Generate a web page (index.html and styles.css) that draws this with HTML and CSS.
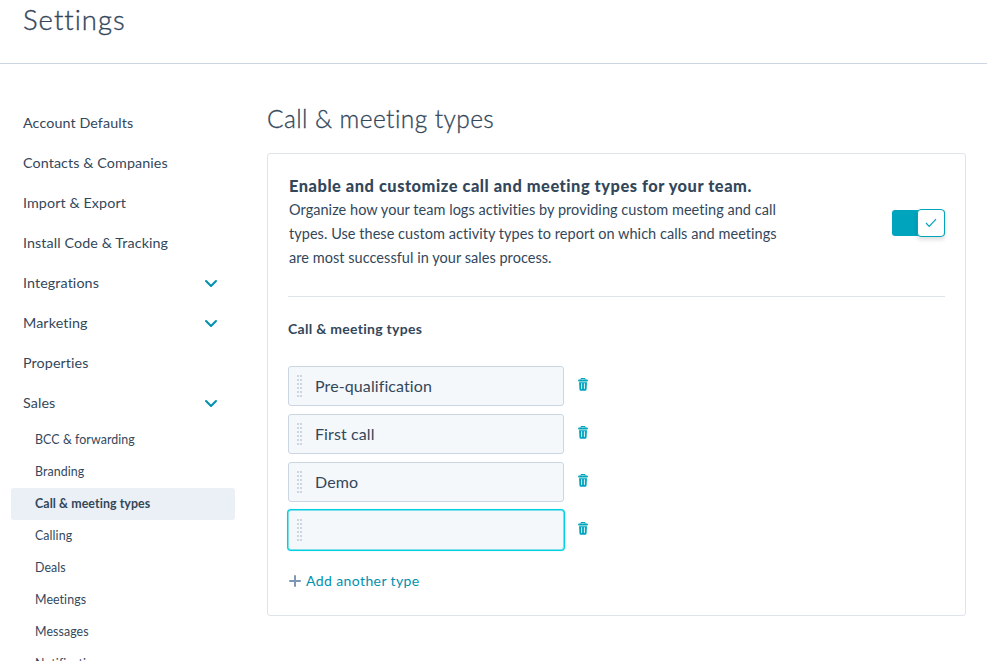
FILE: index.html
```html
<!DOCTYPE html>
<html lang="en">
<head>
  <meta charset="UTF-8">
  <meta name="viewport" content="width=device-width, initial-scale=1.0">
  <title>Settings</title>
  <link rel="stylesheet" href="styles.css">
</head>
<body>
  <!-- Shared icons -->
  <svg class="icon-defs" width="0" height="0">
    <symbol id="chevron" viewBox="0 0 14 10">
      <path d="M2 2l5 5 5-5" fill="none" stroke="currentColor" stroke-width="2" stroke-linecap="round" stroke-linejoin="round"/>
    </symbol>
    <symbol id="trash" viewBox="0 0 10 13">
      <path d="M3 1.6V.5h4v1.1" fill="none" stroke="currentColor"/>
      <rect x="0.2" y="1.4" width="9.6" height="2" rx="0.6" fill="currentColor"/>
      <path d="M1 4.2h8l-.5 7.3q-.1 1.3-1.3 1.3H2.8q-1.2 0-1.3-1.3z" fill="currentColor"/>
      <path d="M3.6 5.3v5.6M6.4 5.3v5.6" fill="none" stroke="#fff" stroke-width="0.9"/>
    </symbol>
    <symbol id="grip" viewBox="0 0 5 22">
      <path d="M1 0v22M4 0v22" fill="none" stroke="#cbd6e2" stroke-width="2" stroke-dasharray="2 2"/>
    </symbol>
  </svg>

  <!-- Header -->
  <header>
    <h1>Settings</h1>
  </header>

  <div class="layout">
    <!-- Sidebar -->
    <nav class="sidebar">
      <a href="#" class="nav-item">Account Defaults</a>
      <a href="#" class="nav-item">Contacts &amp; Companies</a>
      <a href="#" class="nav-item">Import &amp; Export</a>
      <a href="#" class="nav-item">Install Code &amp; Tracking</a>
      <a href="#" class="nav-item">Integrations <svg class="chevron"><use href="#chevron"/></svg></a>
      <a href="#" class="nav-item">Marketing <svg class="chevron"><use href="#chevron"/></svg></a>
      <a href="#" class="nav-item">Properties</a>
      <a href="#" class="nav-item">Sales <svg class="chevron"><use href="#chevron"/></svg></a>
      <div class="sub-nav">
        <a href="#">BCC &amp; forwarding</a>
        <a href="#">Branding</a>
        <a href="#" class="active">Call &amp; meeting types</a>
        <a href="#">Calling</a>
        <a href="#">Deals</a>
        <a href="#">Meetings</a>
        <a href="#">Messages</a>
        <a href="#">Notifications</a>
      </div>
    </nav>

    <!-- Main Content -->
    <main>
      <h2>Call &amp; meeting types</h2>
      <section class="card">
        <div class="intro">
          <div class="intro-text">
            <h3>Enable and customize call and meeting types for your team.</h3>
            <p>Organize how your team logs activities by providing custom meeting and call<br>
              types. Use these custom activity types to report on which calls and meetings<br>
              are most successful in your sales process.</p>
          </div>
          <div class="toggle">
            <span class="toggle-handle">
              <svg width="12" height="10" viewBox="0 0 12 10"><path d="M1 5l3.2 3.3L11 1.2" fill="none" stroke="currentColor" stroke-width="1.2"/></svg>
            </span>
          </div>
        </div>

        <h4>Call &amp; meeting types</h4>
        <div class="type-list">
          <div class="type-row">
            <div class="type-input"><svg class="grip"><use href="#grip"/></svg><span>Pre-qualification</span></div>
            <svg class="trash"><use href="#trash"/></svg>
          </div>
          <div class="type-row">
            <div class="type-input"><svg class="grip"><use href="#grip"/></svg><span>First call</span></div>
            <svg class="trash"><use href="#trash"/></svg>
          </div>
          <div class="type-row">
            <div class="type-input"><svg class="grip"><use href="#grip"/></svg><span>Demo</span></div>
            <svg class="trash"><use href="#trash"/></svg>
          </div>
          <div class="type-row">
            <div class="type-input focused"><svg class="grip"><use href="#grip"/></svg></div>
            <svg class="trash"><use href="#trash"/></svg>
          </div>
        </div>
        <a href="#" class="add-type">
          <svg width="12" height="12" viewBox="0 0 12 12"><path d="M6 1v10M1 6h10" stroke="#7c98b6" stroke-width="2" stroke-linecap="round"/></svg>
          Add another type
        </a>
      </section>
    </main>
  </div>
</body>
</html>
```
FILE: styles.css
```css
/* General Styles */
* {
  box-sizing: border-box;
}

body {
  font-family: Lato, 'Open Sans', sans-serif;
  background: #fff;
  margin: 0;
  color: #33475b;
  height: 661px;
  overflow: hidden;
}

h1, h2, h3, h4, p {
  margin: 0;
}

a {
  color: inherit;
  text-decoration: none;
}

svg {
  flex: none;
}

.icon-defs {
  display: block;
}

/* Header */
header {
  height: 64px;
  padding: 0 23px;
  border-bottom: 1px solid #cbd6e2;
}

h1 {
  font-size: 27.5px;
  font-weight: 300;
  line-height: 39px;
  letter-spacing: 1px;
  -webkit-text-stroke: 0.35px #33475b;
}

.layout {
  display: flex;
  gap: 32px;
  padding: 39px 21px 0 11px;
}

/* Sidebar */
.sidebar {
  width: 224px;
  flex: none;
}

.nav-item {
  display: flex;
  align-items: center;
  justify-content: space-between;
  height: 40px;
  padding: 0 17px 2px 12px;
  font-size: 14.3px;
  letter-spacing: 0.1px;
}

.chevron {
  width: 14px;
  height: 10px;
  margin-top: 4px;
  color: #0091ae;
}

.sub-nav {
  padding-top: 1px;
}

.sub-nav a {
  display: flex;
  align-items: center;
  height: 32px;
  padding: 0 0 2px 24px;
  font-size: 12.4px;
  letter-spacing: 0.08px;
  border-radius: 3px;
}

.sub-nav .active {
  background: #eaf0f6;
  font-weight: 700;
}

/* Main Content */
main {
  flex: 1;
}

h2 {
  font-size: 24.5px;
  font-weight: 300;
  line-height: 32px;
  letter-spacing: 0.42px;
  margin-bottom: 18px;
  -webkit-text-stroke: 0.3px #33475b;
}

.card {
  height: 463px;
  padding: 20px;
  border: 1px solid #dfe3eb;
  border-radius: 3px;
}

.intro {
  display: flex;
  justify-content: space-between;
  align-items: flex-start;
  padding-bottom: 26px;
  border-bottom: 1px solid #dfe3eb;
}

.intro-text {
  padding-left: 1px;
}

h3 {
  font-size: 16.4px;
  font-weight: 900;
  line-height: 24px;
  letter-spacing: 0.53px;
}

p {
  font-size: 14.5px;
  line-height: 24px;
  letter-spacing: 0.04px;
  white-space: nowrap;
}

/* Toggle */
.toggle {
  display: flex;
  justify-content: flex-end;
  align-items: center;
  width: 53px;
  height: 26px;
  margin-top: 36px;
  background: #00a4bd;
  border-radius: 3px;
}

.toggle-handle {
  display: flex;
  align-items: center;
  justify-content: center;
  width: 28px;
  height: 28px;
  background: #fff;
  border: 1px solid #00a4bd;
  border-radius: 4px;
  color: #00a4bd;
  box-shadow: 0 3px 4px rgba(0, 0, 0, 0.12);
}

/* Types */
h4 {
  font-size: 14px;
  font-weight: 700;
  line-height: 24px;
  letter-spacing: 0.28px;
  margin: 20px 0 25px;
}

.type-list {
  display: flex;
  flex-direction: column;
  gap: 8px;
}

.type-row {
  display: flex;
  gap: 13.5px;
}

.type-input {
  display: flex;
  align-items: center;
  gap: 13px;
  width: 276px;
  height: 40px;
  padding-left: 8px;
  background: #f5f8fa;
  border: 1px solid #cbd6e2;
  border-radius: 3px;
  font-size: 16px;
  letter-spacing: 0.1px;
}

.type-input span {
  padding-bottom: 2px;
}

.type-input.focused {
  border-color: #7fe0ea;
  box-shadow: 0 0 0 1px #00d0e4, 0 0 3px rgba(0, 208, 228, 0.4);
}

.grip {
  width: 5px;
  height: 22px;
}

.trash {
  width: 10px;
  height: 13px;
  margin-top: 12px;
  color: #00a4bd;
}

.add-type {
  display: flex;
  align-items: center;
  gap: 5px;
  margin-top: 19px;
  padding-left: 1px;
  font-size: 14px;
  line-height: 24px;
  letter-spacing: 0.4px;
  color: #0091ae;
}
```
